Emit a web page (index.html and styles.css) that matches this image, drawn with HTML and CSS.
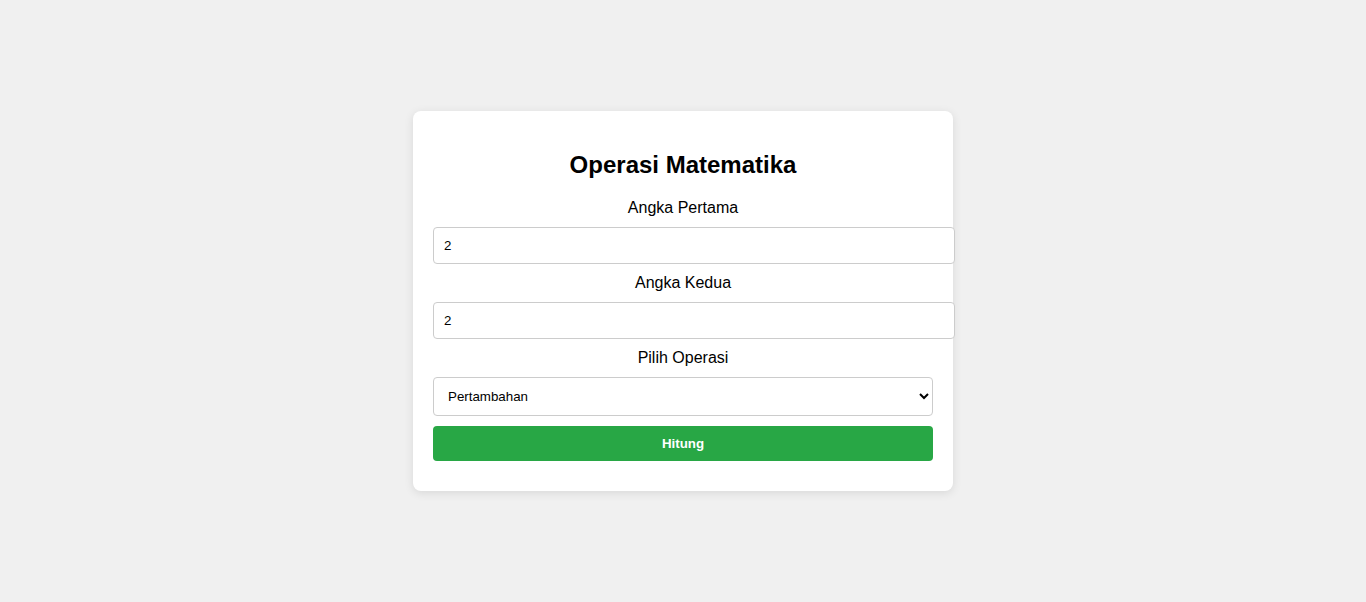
FILE: index.html
```html
<!DOCTYPE html>
<html lang="id">
<head>
<meta charset="utf-8">
<title>Operasi Matematika</title>
<link rel="stylesheet" href="styles.css">
</head>
<body>
  <div class="card">
    <h2 class="title">Operasi Matematika</h2>
    <form class="form">
      <label class="label" for="a">Angka Pertama</label>
      <input class="field" id="a" type="number" value="2">
      <label class="label" for="b">Angka Kedua</label>
      <input class="field" id="b" type="number" value="2">
      <label class="label" for="op">Pilih Operasi</label>
      <select class="select" id="op">
        <option>Pertambahan</option>
        <option>Pengurangan</option>
        <option>Perkalian</option>
        <option>Pembagian</option>
      </select>
      <button class="btn" type="button">Hitung</button>
    </form>
  </div>
</body>
</html>
```
FILE: styles.css
```css
html, body {
  margin: 0;
  padding: 0;
}
body {
  font-family: "Liberation Sans", Arial, sans-serif;
  background: #f0f0f0;
  height: 100vh;
  display: flex;
  justify-content: center;
  align-items: center;
}
.card {
  background: #fff;
  width: 500px;
  padding: 20px;
  border-radius: 8px;
  box-shadow: 0 2px 10px rgba(0, 0, 0, 0.1);
  text-align: center;
}
.title {
  font-size: 24px;
  margin: 20px 0;
  color: #000;
}
.form {
  margin: 0;
}
.label {
  display: block;
  font-size: 16px;
  margin-bottom: 10px;
  color: #000;
}
.field {
  display: block;
  width: 100%;
  padding: 10px;
  margin: 0 0 10px;
  border: 1px solid #ccc;
  border-radius: 4px;
  font-family: "Liberation Sans", Arial, sans-serif;
  font-size: 13.333px;
  color: #000;
}
.field::-webkit-inner-spin-button,
.field::-webkit-outer-spin-button {
  -webkit-appearance: none;
  margin: 0;
}
.select {
  display: block;
  width: 100%;
  padding: 10px;
  margin: 0 0 10px;
  border: 1px solid #ccc;
  border-radius: 4px;
  background: #fff;
  font-family: "Liberation Sans", Arial, sans-serif;
  font-size: 13.333px;
  color: #000;
}
.btn {
  display: block;
  width: 100%;
  padding: 10px;
  margin: 0 0 10px;
  border: none;
  border-radius: 4px;
  background: #28a745;
  color: #fff;
  font-family: "Liberation Sans", Arial, sans-serif;
  font-size: 13.333px;
  font-weight: bold;
  cursor: pointer;
}
```
